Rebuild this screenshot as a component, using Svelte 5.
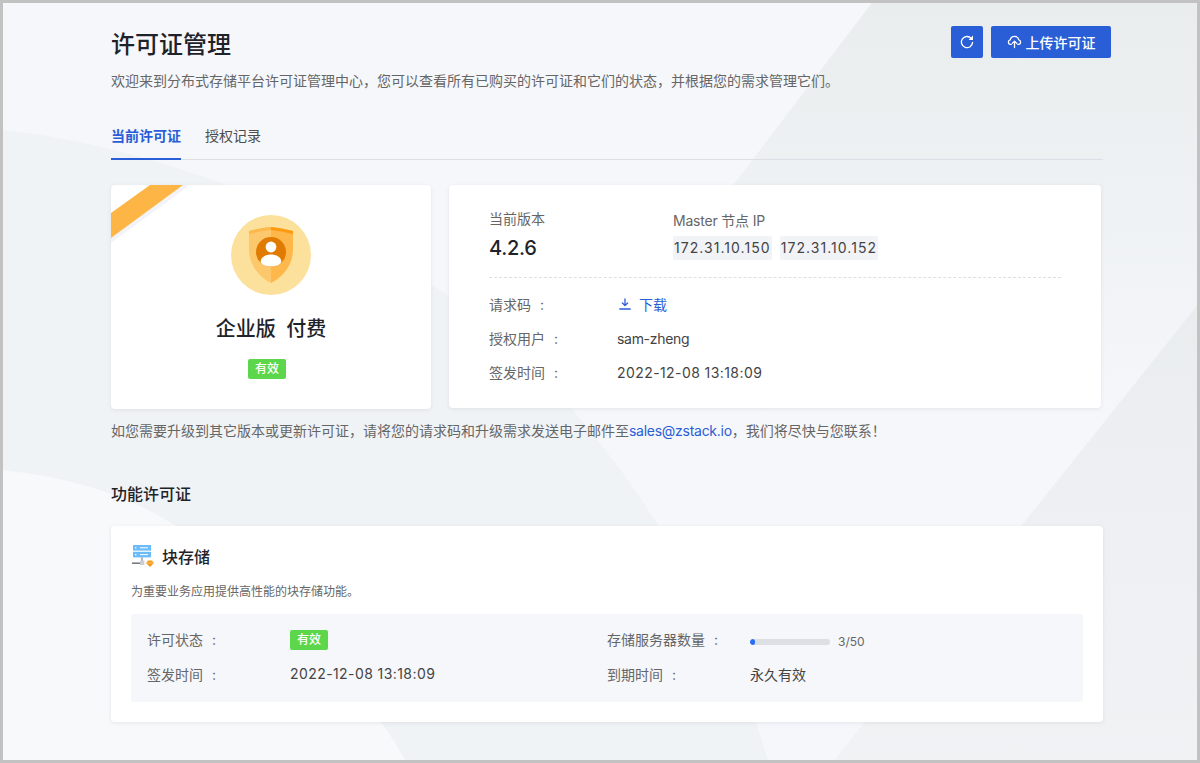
<script>
  const rows = [
    { label: '授权用户', value: 'sam-zheng', spaced: false },
    { label: '签发时间', value: '2022-12-08 13:18:09', spaced: true }
  ]
  const ips = ['172.31.10.150', '172.31.10.152']
  const used = 3
  const total = 50
</script>

<div class="frame">
  <svg class="bg" viewBox="0 0 1200 763" aria-hidden="true">
    <defs>
      <linearGradient id="corner" x1="0" y1="0" x2="0" y2="1">
        <stop offset="0" stop-color="#e9eded" />
        <stop offset="1" stop-color="#f5f7fb" />
      </linearGradient>
      <linearGradient id="right" x1="0" y1="0" x2="0" y2="1">
        <stop offset="0" stop-color="#e9edee" />
        <stop offset="0.4" stop-color="#eeeff2" />
        <stop offset="1" stop-color="#f1f2f4" />
      </linearGradient>
    </defs>
    <rect width="1200" height="763" fill="#f5f7fb" />
    <path d="M874 0 L1200 0 L1200 430 L547 430 Z" fill="url(#corner)" />
    <path d="M0 130 C120 140 300 200 440 290 C600 400 720 600 769 763 L0 763 Z" fill="#f0f3f6" />
    <path d="M0 470 C80 478 140 500 190 535 C280 600 360 680 407 763 L0 763 Z" fill="#f8f9fb" />
    <path d="M1200 302 L832 763 L1200 763 Z" fill="url(#right)" />
  </svg>

  <main class="page">
    <header class="head">
      <div>
        <h1>许可证管理</h1>
        <p class="intro">欢迎来到分布式存储平台许可证管理中心&#xFF0C;您可以查看所有已购买的许可证和它们的状态&#xFF0C;并根据您的需求管理它们。</p>
      </div>
      <div class="actions">
        <button class="btn square" aria-label="刷新">
          <svg width="14" height="14" viewBox="0 0 14 14" fill="none" stroke="#fff" stroke-width="1.3" stroke-linecap="round">
            <path d="M11.4 3.6 A5.6 5.6 0 1 0 12.6 7.4" />
            <path d="M13 .6 V5 H8.6 Z" fill="#fff" stroke="none" />
          </svg>
        </button>
        <button class="btn wide">
          <svg width="15" height="14" viewBox="0 0 15 14" fill="none" stroke="#fff" stroke-width="1.3" stroke-linecap="round" stroke-linejoin="round">
            <path d="M4.2 9.4 H3.2 A2.3 2.3 0 0 1 3.2 4.9 A4.4 4.4 0 0 1 11.8 4.9 A2.3 2.3 0 0 1 11.8 9.4 H10.8" />
            <path d="M7.5 12.6 V6.2 M5.2 8.4 L7.5 6.1 L9.8 8.4" />
          </svg>
          上传许可证
        </button>
      </div>
    </header>

    <nav class="tabs">
      <span class="tab active">当前许可证</span>
      <span class="tab">授权记录</span>
    </nav>

    <section class="cards">
      <div class="card edition">
        <svg class="ribbon" width="100" height="70" viewBox="0 0 100 70" aria-hidden="true">
          <path d="M79 0 H72 L0 53 V58 Z" fill="#f2f4f9" />
          <path d="M39 0 H72 L0 53 V28 Z" fill="#fdb645" />
        </svg>
        <svg class="badge" width="80" height="80" viewBox="0 0 80 80" aria-hidden="true">
          <circle cx="40" cy="40" r="40" fill="#fce19d" />
          <path d="M18 16 Q30 13 40 12 V68 C28 62 18 50 18 34 Z" fill="#fdc86b" />
          <path d="M62 16 Q50 13 40 12 V68 C52 62 62 50 62 34 Z" fill="#fdb74a" />
          <path d="M18 16 Q30 13 40 12 V15 Q30 16 18 19 Z" fill="#fdb74a" />
          <path d="M62 16 Q50 13 40 12 V15 Q50 16 62 19 Z" fill="#fd9a10" />
          <circle cx="40" cy="37" r="15" fill="#e07b00" />
          <circle cx="40" cy="32" r="5.4" fill="#fff" />
          <path d="M29.6 47 C29.6 37 50.4 37 50.4 47 C48 53 32 53 29.6 47 Z" fill="#fff" />
        </svg>
        <h2>企业版&nbsp;&nbsp;付费</h2>
        <span class="tag shifted">有效</span>
      </div>

      <div class="card info">
        <div class="top">
          <div class="version">
            <span class="muted">当前版本</span>
            <strong>4.2.6</strong>
          </div>
          <div class="master">
            <span class="muted tight">Master 节点 IP</span>
            <div class="ips">
              {#each ips as ip (ip)}
                <span class="ip">{ip}</span>
              {/each}
            </div>
          </div>
        </div>
        <dl class="facts">
          <dt>请求码<i>:</i></dt>
          <dd>
            <a class="download" href="#top">
              <svg width="12" height="12" viewBox="0 0 12 12" fill="none" stroke="#2a5ed6" stroke-width="1.3" stroke-linecap="round" stroke-linejoin="round">
                <path d="M6 1 V7.4 M3.4 5 L6 7.6 L8.6 5 M.8 11 H11.2" />
              </svg>
              下载
            </a>
          </dd>
          {#each rows as row (row.label)}
            <dt>{row.label}<i>:</i></dt>
            <dd class:spaced={row.spaced} class:narrow={!row.spaced}>{row.value}</dd>
          {/each}
        </dl>
      </div>
    </section>

    <p class="note">如您需要升级到其它版本或更新许可证&#xFF0C;请将您的请求码和升级需求发送电子邮件至<a href="#top">sales@zstack.io</a>&#xFF0C;我们将尽快与您联系&#xFF01;</p>

    <h3>功能许可证</h3>

    <section class="card feature">
      <div class="feature-title">
        <svg width="24" height="24" viewBox="0 0 24 24" aria-hidden="true">
          <rect x="2" y="1" width="18" height="5.6" fill="#6cbcfc" />
          <rect x="2" y="7.8" width="18" height="5.6" fill="#6cbcfc" />
          <path d="M9 3.8 H17 M9 10.6 H17" stroke="#fff" stroke-width="1" />
          <rect x="4" y="3.2" width="1.4" height="1.2" fill="#fff" />
          <rect x="4" y="10" width="1.4" height="1.2" fill="#fff" />
          <rect x="10.3" y="13.4" width="1.4" height="4" fill="#8f9aa6" />
          <rect x="1" y="18.6" width="8" height="1.1" fill="#3c4248" />
          <rect x="9" y="16.6" width="4.4" height="4.4" fill="#c9ced4" />
          <path d="M15 19 L17 16.4 H21 L23 19 L19 23 Z" fill="#f59a16" />
          <path d="M15 19 H23" stroke="#fdd089" stroke-width=".8" />
        </svg>
        <span>块存储</span>
      </div>
      <p class="desc">为重要业务应用提供高性能的块存储功能。</p>
      <div class="panel">
        <span class="key">许可状态<i>:</i></span>
        <span class="status"><span class="tag">有效</span></span>
        <span class="key">存储服务器数量<i>:</i></span>
        <span class="usage">
          <span class="track"><span class="fill" style="width: {(used / total) * 100}%"></span></span>
          <span class="count">{used}/{total}</span>
        </span>
        <span class="key">签发时间<i>:</i></span>
        <span class="val spaced">2022-12-08 13:18:09</span>
        <span class="key">到期时间<i>:</i></span>
        <span class="val">永久有效</span>
      </div>
    </section>
  </main>
</div>

<style>
  :global(body) {
    margin: 0;
    font-family: Inter, "Noto Sans CJK SC", sans-serif;
    color: #1f2329;
  }

  .frame {
    position: relative;
    box-sizing: border-box;
    width: 1200px;
    height: 763px;
    border: 3px solid #c2c2c2;
    overflow: hidden;
  }

  .bg {
    position: absolute;
    left: -3px;
    top: -3px;
    width: 1200px;
    height: 763px;
  }

  .page {
    position: relative;
    width: 992px;
    margin-left: 108px;
    padding-top: 24px;
  }

  .head {
    display: flex;
    justify-content: space-between;
    align-items: flex-start;
    width: 1000px;
    margin-top: -1px;
  }

  h1 {
    margin: 1px 0 0;
    font-size: 24px;
    line-height: 36px;
    font-weight: 500;
  }

  .intro {
    margin: 7px 0 0;
    font-size: 14px;
    line-height: 22px;
    color: #666;
    white-space: nowrap;
  }

  .actions {
    display: flex;
    gap: 8px;
  }

  .btn {
    display: flex;
    align-items: center;
    justify-content: center;
    gap: 4px;
    height: 32px;
    padding: 0;
    border: 0;
    border-radius: 2px;
    background: #2a5ed6;
    color: #fff;
    font: inherit;
    font-size: 14px;
    font-weight: 500;
  }

  .square {
    width: 32px;
  }

  .wide {
    width: 120px;
  }

  .tabs {
    display: flex;
    gap: 24px;
    height: 45px;
    margin-top: 23px;
    border-bottom: 1px solid #dcdfe6;
    box-sizing: border-box;
  }

  .tab {
    height: 45px;
    box-sizing: border-box;
    padding-top: 10px;
    font-size: 14px;
    line-height: 22px;
    color: #4d4d4d;
  }

  .active {
    color: #2a5ed6;
    font-weight: 700;
    border-bottom: 2px solid #2a5ed6;
  }

  .cards {
    display: flex;
    gap: 18px;
    margin-top: 25px;
  }

  .card {
    background: #fff;
    border-radius: 4px;
    box-shadow: 0 1px 4px rgba(30, 40, 60, 0.09);
  }

  .edition {
    position: relative;
    display: flex;
    flex-direction: column;
    align-items: center;
    width: 320px;
    height: 224px;
    overflow: hidden;
  }

  .ribbon {
    position: absolute;
    left: 0;
    top: 0;
  }

  .badge {
    margin-top: 30px;
  }

  h2 {
    margin: 20px 0 0;
    font-size: 20px;
    line-height: 28px;
    font-weight: 500;
  }

  .tag {
    display: inline-block;
    width: 38px;
    height: 20px;
    border-radius: 2px;
    background: #5cd64a;
    color: #fff;
    font-size: 12px;
    line-height: 20px;
    font-weight: 500;
    text-align: center;
  }

  .shifted {
    margin-top: 16px;
    margin-right: 8px;
  }

  .status {
    padding-top: 2px;
  }

  .info {
    box-sizing: border-box;
    width: 652px;
    height: 223px;
    padding: 24px 40px 0;
  }

  .top {
    display: flex;
    height: 68px;
    border-bottom: 1px dashed #dcdfe6;
  }

  .version {
    display: flex;
    flex-direction: column;
    width: 184px;
  }

  .muted {
    font-size: 14px;
    line-height: 20px;
    color: #666;
  }

  .tight {
    letter-spacing: -0.2px;
  }

  .version strong {
    margin-top: 5px;
    font-size: 20px;
    line-height: 28px;
    font-weight: 500;
    letter-spacing: -0.3px;
  }

  .master {
    padding-top: 1px;
  }

  .ips {
    display: flex;
    gap: 8px;
    margin-top: 5px;
  }

  .ip {
    height: 24px;
    padding: 0 1px;
    border-radius: 2px;
    background: #f2f3f6;
    font-size: 14px;
    line-height: 24px;
    letter-spacing: 1.05px;
    color: #444;
  }

  .facts {
    display: grid;
    grid-template-columns: 128px 1fr;
    grid-auto-rows: 34px;
    align-items: center;
    margin: 9px 0 0;
    font-size: 14px;
  }

  dt {
    color: #666;
  }

  dt i,
  .key i {
    margin-left: 9px;
    font-style: normal;
  }

  dd {
    margin: 0;
    color: #444;
  }

  .spaced {
    letter-spacing: 0.42px;
  }

  .narrow {
    letter-spacing: -0.3px;
  }

  .download {
    display: inline-flex;
    align-items: center;
    gap: 8px;
    margin-left: 2px;
    color: #2a5ed6;
    text-decoration: none;
  }

  .note {
    margin: 11px 0 0;
    font-size: 14px;
    line-height: 22px;
    color: #666;
    white-space: nowrap;
  }

  .note a {
    color: #2a5ed6;
    text-decoration: none;
    letter-spacing: -0.27px;
  }

  h3 {
    margin: 40px 0 0;
    font-size: 16px;
    line-height: 24px;
    font-weight: 500;
  }

  .feature {
    box-sizing: border-box;
    height: 196px;
    margin-top: 20px;
    padding: 18px 20px 0;
  }

  .feature-title {
    display: flex;
    align-items: center;
    gap: 7px;
    height: 24px;
    font-size: 16px;
    font-weight: 500;
  }

  .desc {
    margin: 14px 0 0;
    font-size: 12px;
    line-height: 20px;
    color: #666;
  }

  .panel {
    display: grid;
    grid-template-columns: 143px 317px 143px 1fr;
    grid-auto-rows: 35px;
    align-items: center;
    box-sizing: border-box;
    height: 88px;
    margin-top: 12px;
    padding: 7px 16px 0;
    border-radius: 2px;
    background: #f5f7fb;
    font-size: 14px;
  }

  .key {
    color: #666;
  }

  .val {
    color: #444;
  }

  .usage {
    display: flex;
    align-items: center;
    gap: 8px;
    padding-top: 6px;
  }

  .track {
    display: block;
    width: 80px;
    height: 6px;
    border-radius: 3px;
    background: #dcdfe4;
    overflow: hidden;
  }

  .fill {
    display: block;
    height: 100%;
    border-radius: 3px;
    background: #2a6ff0;
  }

  .count {
    font-size: 12px;
    color: #666;
  }
</style>
